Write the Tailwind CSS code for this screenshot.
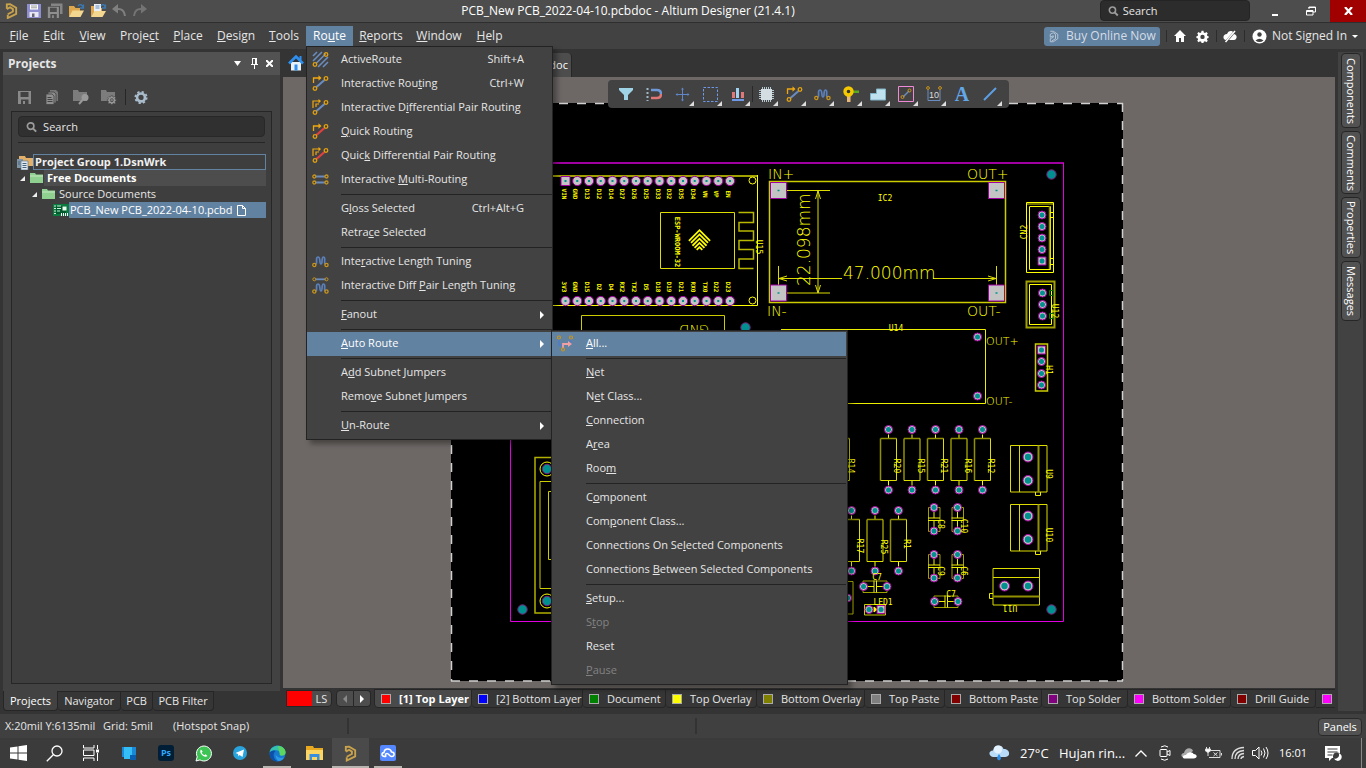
<!DOCTYPE html>
<html lang="en">
<head>
<meta charset="utf-8">
<title>PCB_New PCB_2022-04-10.pcbdoc - Altium Designer (21.4.1)</title>
<script src="https://cdn.jsdelivr.net/npm/@tailwindcss/browser@4"></script>
</head>
<body class="h-screen overflow-hidden flex flex-col bg-[#343434] text-[#e6e6e6] text-[11px] leading-4 font-['Open_Sans','Noto_Sans',sans-serif] select-none">

<!-- Shared icon shapes -->
<svg width="0" height="0" class="absolute" aria-hidden="true">
  <defs>
    <g id="altium" fill="none" stroke="#c9a24c" stroke-width="2"><path d="M3 6V1.500L6.500 1.200 13 5v6.500L4 16v-3.500"/><path d="M3 6.500 6.500 4.500 9.500 6.500V9L4 12"/></g>
    <g id="nodes" fill="none" stroke="#e0a010" stroke-width="1.300"><circle cx="14" cy="3.500" r="1.800"/><circle cx="3" cy="13.500" r="1.800"/></g>
    <g id="arrow1"><path d="M1.500 8V3h6" fill="none" stroke="#f0a810" stroke-width="1.300"/><path d="M6.500.3v5.400L9.500 3z" fill="#f0a810"/></g>
    <g id="arrow2"><path d="M1 9V2h6M4 8V5h3" fill="none" stroke="#f0a810" stroke-width="1.200"/><path d="M6.500 0v4.400L9 2z" fill="#f0a810"/></g>
    <path id="wave" d="M3.500 11C6 11 3 4 6 4s1 7 3 7 0-7 2.500-7 0 7 2 7" fill="none" stroke="#5b80bb" stroke-width="1.700"/>
    <g id="ends" fill="none" stroke="#c8941c" stroke-width="1.300"><circle cx="2.300" cy="12" r="1.600"/><circle cx="14.500" cy="12" r="1.600"/></g>
    <path id="gear" fill-rule="evenodd" d="M6.800 1h2.400l.4 2 1.500.6L12.800 2.500l1.700 1.700-1.100 1.700.6 1.500 1.500.3v2l-1.500.4-.6 1.500 1.100 1.700-1.700 1.700-1.700-1.100-1.500.6-.4 1.500H6.800l-.4-1.500-1.500-.6-1.700 1.100-1.700-1.700 1.100-1.700L2 10.100.5 9.700v-2L2 7.400l.6-1.500L1.500 4.200l1.700-1.700 1.700 1.100L6.400 3zM8 5.800a2.700 2.700 0 1 0 0 5.400 2.700 2.700 0 0 0 0-5.400z"/>
    <g id="mag" fill="none" stroke="#9c9c9c" stroke-width="1.800"><circle cx="5" cy="5" r="3.500"/><path d="M7.500 7.500 11 11" stroke-width="2.200"/></g>
    <path id="floppy" fill-rule="evenodd" d="M1 1h13v13H1zM3.500 2v5h8V2zM4 9.500V14h2v-3h2v3h3.500V9.500z"/>
    <path id="opn" d="M1 3h5l1.500 2H12v3H5L1 14z" fill="#e0a84c"/>
  </defs>
</svg>

<!-- Title bar -->
<header class="relative h-[23px] shrink-0 flex items-center bg-[#4d4d4d] border-b border-[#2e2e2e] pl-1">
  <div class="flex items-center gap-[5px]">
    <svg width="15" height="16" viewBox="0 0 16 17"><use href="#altium"/></svg>
    <button aria-label="Save" class="ml-[2px]"><svg width="16" height="16" viewBox="0 0 16 16"><path d="M1 1h14v14H1z" fill="#8f8fd0"/><path d="M4 1.500h8v5H4z" fill="#fff"/><path d="M5 3h6M5 4.800h6" stroke="#999"/><path d="M3.500 9h9v5h-9z" fill="#e8e8f4"/><path d="M6 10.500h2.500V14H6z" fill="#667"/></svg></button>
    <button aria-label="Save all"><svg width="16" height="16" viewBox="0 0 16 16"><path d="M4 .5h11.500V11H13V3H4z" fill="#858585"/><g fill="#8f8f8f"><use href="#floppy" transform="translate(0 3) scale(.85)"/></g></svg></button>
    <button aria-label="Open"><svg width="17" height="16" viewBox="0 0 17 16"><use href="#opn"/><path d="M1 14 4.500 7.500H16L12.500 14z" fill="#f5d890"/><path d="M10 3q3-3 5 1M15.500 1.500V5H12" fill="none" stroke="#3b78b0" stroke-width="1.300"/></svg></button>
    <button aria-label="Open document"><svg width="17" height="16" viewBox="0 0 17 16"><use href="#opn"/><path d="M4 1h7v9H4z" fill="#e8f0fa"/><path d="M5.500 3h4M5.500 5h4" stroke="#6a8db5"/><path d="M1 14 4.500 8H16L12.500 14z" fill="#f5d890"/><path d="M11 3q3-3 4 1M15.500 1.500V5H12" fill="none" stroke="#3b78b0" stroke-width="1.300"/></svg></button>
    <button aria-label="Undo"><svg width="15" height="14" viewBox="0 0 15 14"><path d="M5 5q7-1 8 7" fill="none" stroke="#808080" stroke-width="2"/><path d="M6 0v9.500L0 5z" fill="#808080"/></svg></button>
    <button aria-label="Redo"><svg width="15" height="14" viewBox="0 0 15 14"><path d="M10 5Q3 4 2 12" fill="none" stroke="#747474" stroke-width="2"/><path d="M9 0v9.500L15 5z" fill="#747474"/></svg></button>
  </div>
  <h1 class="absolute left-0 right-0 text-center text-xs text-white pointer-events-none pr-[110px]">PCB_New PCB_2022-04-10.pcbdoc - Altium Designer (21.4.1)</h1>
  <div class="ml-auto flex h-[22px]">
    <label class="flex items-center h-[21px] w-[150px] mr-[9px] px-[7px] gap-1 bg-[#2c2c2c] border border-[#242424] rounded-b-[4px] rounded-t-sm">
      <svg width="12" height="12" viewBox="0 0 12 12"><use href="#mag"/></svg>
      <input aria-label="Search" placeholder="Search" class="w-full bg-transparent outline-none placeholder:text-[#e6e6e6]">
    </label>
    <button aria-label="Minimize" class="w-[32px] grid place-items-center"><svg width="8" height="10"><path d="M1 8h6v2H1z" fill="#fff"/></svg></button>
    <button aria-label="Restore" class="w-[39px] grid place-items-center"><svg width="10" height="10" viewBox="0 0 10 10" fill="none" stroke="#fff"><path d="M3 3V1h6.500v5H7M2.500 1.500h7" /><path d="M.5 4.500H7v4.500H.5zM.5 5.500H7"/></svg></button>
    <button aria-label="Close" class="w-[36px] grid place-items-center bg-[#a00000]"><svg width="9" height="8" viewBox="0 0 9 8"><path d="M1 0l7 8M8 0 1 8" stroke="#fff" stroke-width="2.200"/></svg></button>
  </div>
</header>

<!-- Menu bar -->
<nav class="h-[26px] shrink-0 flex items-center bg-[#424242] pl-[2px] text-xs">
  <button class="min-w-[34px] h-[21px]"><u>F</u>ile</button>
  <button class="min-w-[36px] h-[21px]"><u>E</u>dit</button>
  <button class="min-w-[41px] h-[21px]"><u>V</u>iew</button>
  <button class="min-w-[53px] h-[21px]">Proje<u>c</u>t</button>
  <button class="min-w-[44px] h-[21px]"><u>P</u>lace</button>
  <button class="min-w-[52px] h-[21px]"><u>D</u>esign</button>
  <button class="min-w-[44px] h-[21px]"><u>T</u>ools</button>
  <div class="relative">
    <button class="min-w-[47px] h-[21px] bg-[#6282a1] text-white block">Ro<u>u</u>te</button>
    <div role="menu" class="absolute z-20 left-0 top-full -mt-px w-[247px] py-px bg-[#424242] border border-[#232323] shadow-[4px_4px_5px_rgba(0,0,0,0.35)] text-[11px]">
      <button class="w-full h-6 flex items-center pr-[28px]"><span class="w-[34px] pl-[5px]"><svg width="17" height="17" viewBox="0 0 17 17"><path d="M1 5l4-4M1 10 10 1M4 12.500 14 2.500M6 16l10-10M11 16l5-5" stroke="#6a8cc0" stroke-width="1.600"/><use href="#nodes"/></svg></span><span>ActiveRoute</span><span class="ml-auto">Shift+A</span></button>
      <button class="w-full h-6 flex items-center pr-[28px]"><span class="w-[34px] pl-[5px]"><svg width="17" height="17" viewBox="0 0 17 17"><path d="m4.500 12 8-7" stroke="#6a8cc0" stroke-width="2"/><use href="#nodes"/><use href="#arrow1"/></svg></span><span>Interactive Rou<u>t</u>ing</span><span class="ml-auto">Ctrl+W</span></button>
      <button class="w-full h-6 flex items-center"><span class="w-[34px] pl-[5px]"><svg width="17" height="17" viewBox="0 0 17 17"><path d="m4.500 12 8-7" stroke="#6a8cc0" stroke-width="2"/><use href="#nodes"/><use href="#arrow2"/></svg></span><span>Interactive D<u>i</u>fferential Pair Routing</span></button>
      <button class="w-full h-6 flex items-center"><span class="w-[34px] pl-[5px]"><svg width="17" height="17" viewBox="0 0 17 17"><path d="m4.500 12 8-7" stroke="#e04040" stroke-width="2.300"/><use href="#nodes"/><use href="#arrow1"/></svg></span><span><u>Q</u>uick Routing</span></button>
      <button class="w-full h-6 flex items-center"><span class="w-[34px] pl-[5px]"><svg width="17" height="17" viewBox="0 0 17 17"><path d="m4.500 12 8-7" stroke="#e04040" stroke-width="2.300"/><use href="#nodes"/><use href="#arrow2"/></svg></span><span>Quic<u>k</u> Differential Pair Routing</span></button>
      <button class="w-full h-6 flex items-center"><span class="w-[34px] pl-[5px]"><svg width="17" height="17" viewBox="0 0 17 17"><path d="M4 5.500h9M4 11.500h9" stroke="#6a8cc0" stroke-width="2"/><g fill="none" stroke="#c8941c" stroke-width="1.300"><circle cx="2.300" cy="5.500" r="1.500"/><circle cx="14.500" cy="5.500" r="1.500"/><circle cx="2.300" cy="11.500" r="1.500"/><circle cx="14.500" cy="11.500" r="1.500"/></g></svg></span><span>Interactive <u>M</u>ulti-Routing</span></button>
      <hr class="ml-[34px] my-[2px] border-[#232323]">
      <button class="w-full h-6 flex items-center pl-[34px] pr-[28px]"><span>G<u>l</u>oss Selected</span><span class="ml-auto">Ctrl+Alt+G</span></button>
      <button class="w-full h-6 flex items-center pl-[34px]"><span>Retra<u>c</u>e Selected</span></button>
      <hr class="ml-[34px] my-[2px] border-[#232323]">
      <button class="w-full h-6 flex items-center"><span class="w-[34px] pl-[5px]"><svg width="17" height="17" viewBox="0 0 17 17"><use href="#wave"/><use href="#ends"/></svg></span><span>Inte<u>r</u>active Length Tuning</span></button>
      <button class="w-full h-6 flex items-center"><span class="w-[34px] pl-[5px]"><svg width="17" height="17" viewBox="0 0 17 17"><use href="#wave" y="3"/><use href="#ends" y="2.500"/><path d="M3.500 2.300h10" stroke="#6a8cc0" stroke-width="1.800"/><circle cx="2.300" cy="2.300" r="1.500" fill="none" stroke="#c8941c"/><circle cx="14.500" cy="2.300" r="1.500" fill="none" stroke="#c8941c"/></svg></span><span>Interactive Diff <u>P</u>air Length Tuning</span></button>
      <hr class="ml-[34px] my-[2px] border-[#232323]">
      <button class="w-full h-6 flex items-center pl-[34px] pr-[8px]"><span><u>F</u>anout</span><svg class="ml-auto" width="4" height="8"><path d="M0 0v8l4-4z" fill="#fff"/></svg></button>
      <hr class="ml-[34px] my-[2px] border-[#232323]">
      <div class="relative">
        <button class="w-full h-6 border-r border-[#424242] bg-[#6282a1] text-white flex items-center pl-[34px] pr-[7px]"><span><u>A</u>uto Route</span><svg class="ml-auto" width="4" height="8"><path d="M0 0v8l4-4z" fill="#fff"/></svg></button>
        <div role="menu" class="absolute z-30 left-[244px] -top-[2px] w-[297px] py-px pr-px bg-[#424242] border border-[#232323] shadow-[4px_4px_5px_rgba(0,0,0,0.35)] text-[#e6e6e6]">
          <button class="w-full h-6 flex items-center bg-[#6282a1] text-white"><span class="w-[34px] pl-[5px]"><svg width="17" height="17" viewBox="0 0 17 17" fill="none"><path d="M2 4v6h4M13.500 4v6" stroke="#4f7cc8" stroke-width="1.500"/><path d="M6 13v-4h6" stroke="#f0a0a0" stroke-width="1.800"/><path d="M11 6v6l4-3z" fill="#f0a0a0"/><g stroke="#c8941c" stroke-width="1.200"><circle cx="2" cy="2.500" r="1.500"/><circle cx="14" cy="2.500" r="1.500"/><circle cx="6" cy="14.500" r="1.500"/></g></svg></span><span><u>A</u>ll...</span></button>
          <hr class="ml-[34px] my-[2px] border-[#232323]">
          <button class="w-full h-6 block text-left pl-[34px]"><u>N</u>et</button>
          <button class="w-full h-6 block text-left pl-[34px]">N<u>e</u>t Class...</button>
          <button class="w-full h-6 block text-left pl-[34px]"><u>C</u>onnection</button>
          <button class="w-full h-6 block text-left pl-[34px]">A<u>r</u>ea</button>
          <button class="w-full h-6 block text-left pl-[34px]">Roo<u>m</u></button>
          <hr class="ml-[34px] my-[2px] border-[#232323]">
          <button class="w-full h-6 block text-left pl-[34px]">C<u>o</u>mponent</button>
          <button class="w-full h-6 block text-left pl-[34px]">Com<u>p</u>onent Class...</button>
          <button class="w-full h-6 block text-left pl-[34px]">Connections On Se<u>l</u>ected Components</button>
          <button class="w-full h-6 block text-left pl-[34px]">Connections <u>B</u>etween Selected Components</button>
          <hr class="ml-[34px] my-[2px] border-[#232323]">
          <button class="w-full h-6 block text-left pl-[34px]"><u>S</u>etup...</button>
          <button disabled class="w-full h-6 block text-left pl-[34px] text-[#828282]">S<u>t</u>op</button>
          <button class="w-full h-6 block text-left pl-[34px]">Reset</button>
          <button disabled class="w-full h-6 block text-left pl-[34px] text-[#828282]"><u>P</u>ause</button>
        </div>
      </div>
      <hr class="ml-[34px] my-[2px] border-[#232323]">
      <button class="w-full h-6 block text-left pl-[34px]">A<u>d</u>d Subnet Jumpers</button>
      <button class="w-full h-6 block text-left pl-[34px]">Remo<u>v</u>e Subnet Jumpers</button>
      <hr class="ml-[34px] my-[2px] border-[#232323]">
      <button class="w-full h-6 flex items-center pl-[34px] pr-[8px]"><span><u>U</u>n-Route</span><svg class="ml-auto" width="4" height="8"><path d="M0 0v8l4-4z" fill="#fff"/></svg></button>
    </div>
  </div>
  <button class="min-w-[56px] h-[21px]"><u>R</u>eports</button>
  <button class="min-w-[60px] h-[21px]"><u>W</u>indow</button>
  <button class="min-w-[41px] h-[21px]"><u>H</u>elp</button>
  <div class="ml-auto flex items-center pr-2">
    <button class="w-[116px] h-[19px] rounded-[3px] bg-[#6282a1] flex items-center justify-center gap-[6px] text-[#d5dde5]"><svg width="12" height="13" viewBox="0 0 16 16" fill="none" stroke="#d0d8e0"><path d="M3 1h4l6 4v6l-6 4H3l0-4 4-2V7L3 9V5l4-2 3 2v6l-5 3"/></svg>Buy Online Now</button>
    <span class="w-px h-3 bg-[#2c2c2c] mx-[6px]"></span>
    <button aria-label="Home" class="w-[14px] mr-[9px]"><svg width="14" height="14" viewBox="0 0 14 14"><path d="M7 1 1 7h2v6h3V9h2v4h3V7h2z" fill="#fff"/></svg></button>
    <button aria-label="Preferences" class="w-[14px]"><svg width="13" height="13" viewBox="0 0 16 16" fill="#fff"><use href="#gear"/></svg></button>
    <span class="w-px h-3 bg-[#2c2c2c] mx-[6px]"></span>
    <button aria-label="Cloud disconnected" class="w-[14px]"><svg width="14" height="14" viewBox="0 0 14 14"><path d="M3 11C-1 10 0 5 4 5c2-4 5-3 6-2zM11 5c4 1 3 6 0 6H6z" fill="#fff"/><path d="M2.500 13 12 2" stroke="#fff" stroke-width="1.500"/></svg></button>
    <span class="w-px h-3 bg-[#2c2c2c] mx-[7px]"></span>
    <button class="flex items-center gap-[5px]"><svg width="15" height="15" viewBox="0 0 15 15"><circle cx="7.500" cy="7.500" r="7" fill="#fff"/><circle cx="7.500" cy="5.500" r="2.200" fill="#424242"/><path d="M3.500 11.500q4-3.500 8 0-4 3-8 0" fill="#424242"/></svg>Not Signed In<svg width="6" height="3"><path d="M0 0h6L3 3z" fill="#fff"/></svg></button>
  </div>
</nav>

<main class="flex-1 min-h-0 flex pl-[3px] pr-[3px]">
  <!-- Projects panel -->
  <aside class="w-[277px] shrink-0 flex flex-col mt-[3px]">
    <div class="flex-1 min-h-0 flex flex-col bg-[#424242]">
      <div class="h-[23px] shrink-0 bg-[#525252] flex items-center pl-[5px] pr-[7px]">
        <h2 class="font-bold text-xs">Projects</h2>
        <div class="ml-auto flex items-center gap-2">
          <button aria-label="Panel menu"><svg width="8" height="5"><path d="M0 0h7L3.500 5z" fill="#fff"/></svg></button>
          <button aria-label="Pin"><svg width="8" height="11"><path d="M1 6.500h7M2.500 0v6M4.500 6v5M2 .5h4" stroke="#fff"/><path d="M5 0h2v6H5z" fill="#fff"/></svg></button>
          <button aria-label="Close panel"><svg width="7" height="7"><path d="m0 0 7 7M7 0 0 7" stroke="#fff" stroke-width="2"/></svg></button>
        </div>
      </div>
      <div class="h-[36px] shrink-0 flex items-center pt-2 pl-[14px] gap-3">
        <button aria-label="Save project" class="w-4"><svg width="15" height="15" viewBox="0 0 15 15" fill="#8a8a8a"><use href="#floppy"/></svg></button>
        <button aria-label="Compile" class="w-4"><svg width="15" height="16" viewBox="0 0 15 16"><path d="M5 1h6l2 2v9H5z" fill="#777"/><path d="M3 3h6l2 2v9H3z" fill="#8a8a8a" stroke="#424242" stroke-width=".8"/><path d="M1 5h6l2 2v8.500H1z" fill="#909090" stroke="#424242" stroke-width=".8"/><path d="M2.500 8.500h4M2.500 10.500h5M2.500 12.500h5" stroke="#424242"/></svg></button>
        <button aria-label="Explore" class="w-4"><svg width="17" height="16" viewBox="0 0 17 16"><path d="M0 1h5l1 2h8v9H0z" fill="#7c7c7c"/><circle cx="12" cy="8.500" r="3.500" fill="#999"/><path d="m9.500 11-3.500 4" stroke="#999" stroke-width="2"/></svg></button>
        <button aria-label="Project options" class="w-4"><svg width="17" height="16" viewBox="0 0 17 16"><path d="M0 1h5l1 2h8v9H0z" fill="#7c7c7c"/><g transform="translate(6 6) scale(.6)" fill="#999" stroke="#424242"><use href="#gear"/></g></svg></button>
        <span class="w-px h-4 bg-[#262626] -mx-1"></span>
        <button aria-label="Settings" class="w-4"><svg width="14" height="14" viewBox="0 0 16 16"><circle cx="8" cy="8.500" r="4.500" fill="none" stroke="#a9bccb" stroke-width="3"/><circle cx="8" cy="8.500" r="6.500" fill="none" stroke="#a9bccb" stroke-width="2" stroke-dasharray="2.600 2.500"/></svg></button>
      </div>
      <div class="flex-1 min-h-0 mx-2 mb-[7px] border border-[#262626] bg-[#3e3e3e] px-[5px]">
        <label class="mt-1 flex items-center gap-[6px] h-[21px] px-[7px] mx-px rounded bg-[#303030] border border-[#282828]">
          <svg width="12" height="12" viewBox="0 0 12 12"><use href="#mag"/></svg>
          <input aria-label="Search projects" placeholder="Search" class="w-full bg-transparent outline-none placeholder:text-[#e6e6e6]">
        </label>
        <hr class="mt-[5px] mx-px border-[#262626]">
        <ul class="mt-[11px]">
          <li class="flex h-4 items-center"><svg class="shrink-0" width="16" height="15" viewBox="0 0 16 15"><path d="M2 1h6l1 2h7v8H2z" fill="#e3b069"/><path d="M0 4h6v9H0z" fill="#7f93a6"/><path d="M4 6h7v9H4z" fill="#dfe8f0" stroke="#61788c" stroke-width=".7"/><path d="M5.500 8.500h4M5.500 10.500h4M5.500 12.500h4M1 7h2M1 9h2" stroke="#49647c"/></svg><span class="flex-1 h-4 border border-[#6282a1] font-bold leading-[14px] pl-px text-[#f0f0f0]">Project Group 1.DsnWrk</span></li>
          <li class="flex h-4 items-center pl-[3px]"><svg width="5" height="5"><path d="M5 0v5H0z" fill="#eee"/></svg><svg class="ml-[5px]" width="14" height="12"><path d="M0 1h5l1 1.500h7V11H0z" fill="#8fcf90"/><path d="M0 4h13" stroke="#c2e8c0"/></svg><span class="flex-1 h-4 pl-[3px] bg-[#4d4d4d] font-bold text-white">Free Documents</span></li>
          <li class="flex h-4 items-center pl-[15px]"><svg width="5" height="5"><path d="M5 0v5H0z" fill="#eee"/></svg><svg class="ml-[5px]" width="14" height="12"><path d="M0 1h5l1 1.500h7V11H0z" fill="#8fcf90"/><path d="M0 4h13" stroke="#c2e8c0"/></svg><span class="pl-[3px]">Source Documents</span></li>
          <li class="flex h-4 items-center pl-[36px]"><svg class="shrink-0" width="16" height="12"><path d="M0 0h16v12H0z" fill="#0a7a3e"/><path d="M3 2h10v8H3z" fill="#005a2c"/><path d="M1 2h2M1 4.500h2M1 7h2M1 9.500h2M4 2h4M4 4.500h4M4 7h3" stroke="#c8f0d8"/><path d="M9.500 2.500h4v4h-4z" fill="#e8fff0"/><path d="M8.500 9v3M10.500 9v3M12.500 9v3M14.500 9v3" stroke="#fff"/></svg><span class="flex-1 flex items-center gap-1 h-4 pl-px bg-[#6282a1] text-white">PCB_New PCB_2022-04-10.pcbd<svg width="9" height="11" viewBox="0 0 9 11"><path d="M.5.5h5l3 3v7h-8zM5.500.5v3h3" fill="none" stroke="#fff"/></svg></span></li>
        </ul>
      </div>
    </div>
    <div class="h-[23px] shrink-0 flex items-start">
      <button class="h-[20px] px-[6px] min-w-[53px] bg-[#424242] border-x border-b border-[#262626] rounded-b text-white">Projects</button>
      <button class="h-[20px] px-[5px] min-w-[63px] bg-[#363636] border-r border-y border-[#262626] rounded-b">Navigator</button>
      <button class="h-[20px] min-w-[32px] bg-[#363636] border-r border-y border-[#262626] rounded-b">PCB</button>
      <button class="h-[20px] px-[5px] min-w-[61px] bg-[#363636] border-r border-y border-[#262626] rounded-b">PCB Filter</button>
    </div>
  </aside>

  <!-- Editor -->
  <section class="flex-1 min-w-0 flex flex-col ml-[3px]">
    <div class="h-[28px] shrink-0 flex items-end pl-[5px]">
      <button aria-label="Home" class="self-center"><svg width="16" height="16" viewBox="0 0 16 16"><path d="M3 7h10v8.500H3z" fill="#e8f0f8"/><path d="m1 8.500 7-7 7 7" fill="none" stroke="#2e8ff0" stroke-width="2.600"/><path d="M11.500 1h2v4h-2z" fill="#2e8ff0"/><path d="M6.500 9.500h3v6h-3z" fill="#2e8ff0"/></svg></button>
      <button class="ml-[7px] h-[24px] w-[261px] rounded-t-[4px] bg-[#4d4d4d] border-r border-[#262626] text-right pr-[3px] text-white">PCB_New PCB_2022-04-10.pcbdoc</button>
    </div>
    <div class="relative flex-1 min-h-0 bg-[#6d6866] overflow-hidden">
      <svg class="block w-full h-full" viewBox="283 77 1052 611" preserveAspectRatio="xMinYMin slice" role="img" aria-label="PCB layout">
        <defs>
          <g id="pad"><circle r="4" fill="#c4c4c4" stroke="#a000a0"/><circle r="2.500" fill="#009090" stroke="none"/></g>
          <g id="sqpad"><path d="M-4-4h8v8h-8z" fill="#c4c4c4" stroke="#a000a0"/><circle r="2.500" fill="#009090" stroke="none"/></g>
          <g id="pin"><circle r="4.600" fill="#c4c4c4" stroke="#a000a0"/><path d="M-1-1h2v2h-2z" fill="#009090" stroke="none"/></g>
          <g id="sqpin"><path d="M-4.500-4.500h9v9h-9z" fill="#c4c4c4" stroke="#a000a0"/><path d="M-1-1h2v2h-2z" fill="#009090" stroke="none"/></g>
          <g id="bigpad"><circle r="5" fill="#c4c4c4" stroke="#a000a0"/><circle r="3.200" fill="#009090" stroke="none"/></g>
          <g id="hole"><circle r="4.700" fill="#009090" stroke="#7a207a"/></g>
          <g id="corner"><path d="M-8-8H8V8H-8z" fill="#c4c4c4" stroke="#a000a0"/><path d="M-1 0h2" stroke="#009090" stroke-width="1.500"/></g>
          <g id="res"><path d="M0 5v4M0 51v5" stroke="#ff0"/><path d="M-8 9v42M-8 9H8" stroke="#909000" stroke-width="1.500"/><path d="M8 9v42H-8" stroke="#dd0"/><use href="#pad"/><use href="#pad" y="60.500"/></g>
          <g id="cap"><path d="M-5.500 0v24M6 0v24M-5.500 0h3M6 0H3M-5.500 24h3M6 24H3" stroke="#a0a000"/><path d="M-6 10.500H6M-6 13H6M0 3v7.500M0 13v8" stroke="#ee0"/><use href="#pad"/><use href="#pad" y="23.500"/></g>
          <g id="term"><path d="M0 0h36.500v46.500H0zM9 0v46.500" stroke="#dd0"/><path d="M28 0v46.500" stroke="#909000" stroke-width="2"/><path d="M25 46.500v3.500h5v-3.500" stroke="#ee0"/><use href="#bigpad" x="17.500" y="11.500"/><use href="#bigpad" x="17.500" y="35"/></g>
        </defs>
        <path d="M451 103h672v578H451z" fill="#000"/>
        <path d="M451 103.500h672M451 681h672M451.500 103v578M1122.500 103v578" stroke="#d0d0d0" stroke-width="1.500" stroke-dasharray="9 9" fill="none"/>
        <path d="M510 163h554" stroke="#a000a0" stroke-width="2"/>
        <path d="M510.500 163v458.500h553V163" fill="none" stroke="#e000e0"/>
        <use href="#hole" x="1051.500" y="174.500"/><use href="#hole" x="1051.500" y="609.500"/><use href="#hole" x="522.500" y="609.500"/><use href="#hole" x="745.500" y="327.500"/>
        <g fill="none" stroke="#ff0">
          <path d="M540 176h218" stroke="#a0a000" stroke-width="2"/><path d="M757.500 175v130.500H540"/>
          <circle cx="752.500" cy="180.500" r="3.500"/><circle cx="752.500" cy="300.500" r="3.500"/>
          <path d="M660.500 212.500h74v56h-74z" stroke="#dd0"/>
          <path d="M738.500 212.500h15v10H739v8.500h14.500v9.500H739v9h14.500v9.500H739v9.500h14.500" stroke="#b8b800" stroke-width="1.500"/>
          <path d="M581.500 340v-24.500h143V340" stroke="#cc0"/>
          <g transform="translate(699.500 241.500) rotate(45)" stroke-width="1.800"><path d="M-8 7v-15h15M-5 7V-5H7M-2 8v-10H8M1 8V1h7M4 8V4h4"/></g>
          <path d="M769.500 181.500h236v121h-236z" stroke="#cc0" stroke-width="1.500"/>
          <path d="M787 190.500h43M787 293h43M818 191v102M815.500 199l2.500-8 2.500 8M815.500 285l2.500 8 2.500-8M778.500 266v19M996.500 266v19M779 278.500h63M933 278.500h63M787 276l-8 2.500 8 2.500M988 276l8 2.500-8 2.500" stroke="#dd0"/>
          <path d="M781 329.500h204.500v74H781" stroke="#ee0"/>
          <path d="M1026.500 202.500h27v70h-27zM1029.500 206.500h21v63h-21z"/><path d="M1027 204h26M1049.500 206v63" stroke="#909000" stroke-width="1.500"/><path d="M1050 212.500h3.500M1050 217.500h3.500M1050 258.500h3.500M1050 264.500h3.500"/>
          <path d="M1026.500 281.500h28v46h-28z" stroke="#a0a000" stroke-width="2"/><path d="M1029.500 284.500h22v40h-22z"/><path d="M1049.500 290.500h4v5h-4zM1049.500 313.500h4v5h-4z" stroke="#087008"/>
          <path d="M1035.500 344h12v47h-12z" stroke="#cc0" stroke-width="1.500"/>
          <use href="#res" x="888.500" y="429.500"/><use href="#res" x="912" y="429.500"/><use href="#res" x="935.500" y="429.500"/><use href="#res" x="959" y="429.500"/><use href="#res" x="982.500" y="429.500"/><use href="#res" x="841.500" y="429.500"/>
          <use href="#res" x="851.500" y="510.500"/><use href="#res" x="875" y="510.500"/><use href="#res" x="898.500" y="510.500"/>
          <use href="#cap" x="934" y="507.500"/><use href="#cap" x="957.500" y="507.500"/><use href="#cap" x="934" y="554.500"/><use href="#cap" x="957.500" y="554.500"/>
          <use href="#cap" transform="translate(887 586.500) rotate(90)"/><use href="#cap" transform="translate(958 601.500) rotate(90)"/>
          <path d="M864.500 604.500h21v10.500h-21z" stroke="#cc0"/><path d="m874 607 3 2.500-3 2.500z" fill="#ff0"/>
          <path d="M848 581.500h5v32.500h-5" stroke="#b0b000"/>
          <use href="#term" x="1010.500" y="445.500"/><use href="#term" x="1010.500" y="504.500"/><use href="#term" transform="translate(1039.500 568.500) rotate(90)"/>
          <path d="M560 457.500h-25v155.500h25" stroke="#b0b000" stroke-width="1.500"/><path d="M560 481.500h-20v107h20M560 491.500h-11.500v68H560" stroke="#cc0"/>
          <circle cx="547" cy="469" r="7"/><circle cx="547" cy="601" r="7"/>
        </g>
        <use href="#hole" x="547" y="469"/><use href="#hole" x="547" y="601"/>
        <g id="pins"></g>
        <use href="#corner" x="778.500" y="190.500"/><use href="#corner" x="996.500" y="190.500"/><use href="#corner" x="778.500" y="293"/><use href="#corner" x="996.500" y="293"/>
        <use href="#pad" x="977.500" y="337"/><use href="#pad" x="977.500" y="396"/>
        <use href="#pad" x="1042" y="215"/><use href="#pad" x="1042" y="226.500"/><use href="#pad" x="1042" y="238"/><use href="#pad" x="1042" y="249.500"/><use href="#sqpad" x="1042" y="261"/>
        <use href="#pad" x="1042.500" y="293"/><use href="#pad" x="1042.500" y="304.500"/><use href="#pad" x="1042.500" y="316"/>
        <use href="#sqpad" x="1041.500" y="350"/><use href="#pad" x="1041.500" y="361.500"/><use href="#pad" x="1041.500" y="373.500"/><use href="#pad" x="1041.500" y="385"/>
        <use href="#pad" x="869" y="609.500"/><use href="#sqpad" x="881" y="609.500"/><use href="#pad" x="847.500" y="598"/>
        <g id="labels" fill="#ff0" text-anchor="middle" class="font-['DejaVu_Sans_Mono',monospace] text-[8px]"></g>
        <g fill="#ff0" class="font-['DejaVu_Sans','Liberation_Sans',sans-serif] font-extralight">
          <g class="text-[14px]"><text x="768" y="179">IN+</text><text x="967" y="179">OUT+</text><text x="767" y="316">IN-</text><text x="967" y="316">OUT-</text></g>
          <g class="text-[11px]"><text x="986" y="345">OUT+</text><text x="986" y="405">OUT-</text><text class="text-[13px]" transform="translate(709 325) rotate(180)">GND</text></g>
          <g class="text-[17px]"><text x="843" y="279">47.000mm</text><text transform="translate(810 286) rotate(-90)">22.098mm</text></g>
        </g>
      </svg>

      <!-- Active bar -->
      <div role="toolbar" class="absolute left-[325px] top-[3px] h-[28px] w-[401px] pl-[4px] flex rounded bg-[#424242]">
        <button aria-label="Filter" class="w-7 grid place-items-center"><svg width="14" height="14" viewBox="0 0 14 14"><path d="M0 1h14v2L9 8v5H5V8L0 3z" fill="#9fd3e6"/></svg></button>
        <button aria-label="Snap" class="w-7 grid place-items-center"><svg width="16" height="14" viewBox="0 0 16 14" fill="none"><path d="M5 3h6q4 0 4 4" stroke="#6f98d8" stroke-width="2.500"/><path d="M5 11h6q4 0 4-4" stroke="#e27676" stroke-width="2.500"/><path d="M1.500 1v13" stroke="#9fb8c8" stroke-width="2" stroke-dasharray="2 2"/></svg></button>
        <button aria-label="Move" class="relative w-7 grid place-items-center"><svg width="15" height="15" viewBox="0 0 15 15"><path d="M7.500 1v13M1 7.500h13" stroke="#5f86c8"/><path d="M6 2.500l1.500-2 1.500 2zM6 12.500l1.500 2 1.500-2zM2.500 6l-2 1.500 2 1.500zM12.500 6l2 1.500-2 1.500z" fill="#5f86c8"/></svg><svg class="absolute right-[2px] bottom-[2px]" width="5" height="5"><path d="M5 0v5H0z" fill="#ddd"/></svg></button>
        <button aria-label="Select" class="relative w-7 grid place-items-center"><svg width="15" height="15"><path d="M.5.5h14v14H.5z" fill="none" stroke="#6f98e8" stroke-dasharray="2.500 1.500"/></svg><svg class="absolute right-[2px] bottom-[2px]" width="5" height="5"><path d="M5 0v5H0z" fill="#ddd"/></svg></button>
        <button aria-label="Align" class="relative w-7 grid place-items-center"><svg width="14" height="14"><path d="M1 5h3v6H1zM10 5h3v6h-3z" fill="#e07878"/><path d="M5 1h3v10H5z" fill="#9fd3f0"/><path d="M1 12h12v2H1z" fill="#6f98e8"/></svg><svg class="absolute right-[2px] bottom-[2px]" width="5" height="5"><path d="M5 0v5H0z" fill="#ddd"/></svg></button>
        <button aria-label="Place component" class="relative w-7 grid place-items-center"><svg class="absolute left-0 top-[6px]" width="1" height="16"><path d="M0 0h1v16H0z" fill="#2a2a2a"/></svg><svg width="15" height="15" viewBox="0 0 15 15"><path d="M3.500 0v15M5.500 0v15M7.500 0v15M9.500 0v15M11.500 0v15M0 3.500h15M0 5.500h15M0 7.500h15M0 9.500h15M0 11.500h15" stroke="#b4c8d2"/><path d="M2 2h11v11H2z" fill="#d4dee2"/></svg><svg class="absolute right-[2px] bottom-[2px]" width="5" height="5"><path d="M5 0v5H0z" fill="#ddd"/></svg></button>
        <button aria-label="Route" class="relative w-7 grid place-items-center"><svg width="17" height="17" viewBox="0 0 17 17"><path d="m4.500 12 8-7" stroke="#6a8cc0" stroke-width="2"/><use href="#nodes"/><use href="#arrow1"/></svg><svg class="absolute right-[2px] bottom-[2px]" width="5" height="5"><path d="M5 0v5H0z" fill="#ddd"/></svg></button>
        <button aria-label="Length tuning" class="relative w-7 grid place-items-center"><svg width="17" height="16" viewBox="0 0 17 16"><use href="#wave"/><use href="#ends"/></svg><svg class="absolute right-[2px] bottom-[2px]" width="5" height="5"><path d="M5 0v5H0z" fill="#ddd"/></svg></button>
        <button aria-label="Via" class="relative w-7 grid place-items-center"><svg width="17" height="16" viewBox="0 0 17 16"><path d="M9 4.500h8v2.500H9z" fill="#58a820"/><path d="M5 9h3.500v7H5z" fill="#e8b878"/><circle cx="6.500" cy="5.500" r="3.500" fill="#333" stroke="#f5c800" stroke-width="3.400"/></svg><svg class="absolute right-[2px] bottom-[2px]" width="5" height="5"><path d="M5 0v5H0z" fill="#ddd"/></svg></button>
        <button aria-label="Polygon" class="relative w-7 grid place-items-center"><svg width="16" height="13"><path d="M.5 5.500h6V1h9v11H.5z" fill="#bfe2ee" stroke="#82b4c8"/></svg><svg class="absolute right-[2px] bottom-[2px]" width="5" height="5"><path d="M5 0v5H0z" fill="#ddd"/></svg></button>
        <button aria-label="Keepout" class="relative w-7 grid place-items-center"><svg width="16" height="16" viewBox="0 0 16 16"><path d="M.5.5h15v15H.5z" fill="none" stroke="#f08ad8"/><path d="m5 11 6-6" stroke="#6a8cc0" stroke-width="1.500"/><g fill="none" stroke="#c8941c"><circle cx="4.500" cy="11" r="1.500"/><circle cx="11.500" cy="4.500" r="1.500"/></g></svg><svg class="absolute right-[2px] bottom-[2px]" width="5" height="5"><path d="M5 0v5H0z" fill="#ddd"/></svg></button>
        <button aria-label="Dimension" class="relative w-7 grid place-items-center"><svg width="16" height="16" viewBox="0 0 16 16"><path d="M2 4v10.500h12V4" fill="none" stroke="#6a8cc0"/><g fill="none" stroke="#c8941c"><circle cx="2" cy="2" r="1.400"/><circle cx="14" cy="2" r="1.400"/></g><text x="8" y="12" text-anchor="middle" fill="#ddd" class="text-[9px] font-['Liberation_Sans',sans-serif]">10</text></svg><svg class="absolute right-[2px] bottom-[2px]" width="5" height="5"><path d="M5 0v5H0z" fill="#ddd"/></svg></button>
        <button aria-label="Text" class="w-7 text-[20px] leading-[28px] text-center font-bold text-[#62a8e8] font-['Liberation_Serif',serif]">A</button>
        <button aria-label="Line" class="relative w-7 grid place-items-center"><svg width="14" height="14"><path d="M1 13 13 1" stroke="#5c9fe4" stroke-width="2"/></svg><svg class="absolute right-[2px] bottom-[2px]" width="5" height="5"><path d="M5 0v5H0z" fill="#ddd"/></svg></button>
      </div>
    </div>
    <!-- Layer tabs -->
    <div class="h-[26px] shrink-0 flex items-start overflow-hidden whitespace-nowrap pl-[3px] pt-[2px]">
      <button class="flex h-[17px] w-[46px] shrink-0 rounded-r border border-[#262626] bg-[#4d4d4d]"><span class="w-[25px] h-[15px] bg-[#f00]"></span><span class="flex-1 text-center leading-[15px]">LS</span></button>
      <button aria-label="Previous layer" class="ml-1 w-[18px] h-[17px] shrink-0 grid place-items-center rounded-l border border-[#262626] bg-[#4d4d4d]"><svg width="4" height="8"><path d="M4 0v8L0 4z" fill="#888"/></svg></button>
      <button aria-label="Next layer" class="w-[17px] h-[17px] shrink-0 grid place-items-center rounded-r border-y border-r border-[#262626] bg-[#4d4d4d]"><svg width="4" height="8"><path d="M0 0v8l4-4z" fill="#fff"/></svg></button>
      <div class="flex ml-[3px] -mt-px">
        <button class="flex items-center gap-2 h-[19px] w-[98px] shrink-0 pl-[6px] border border-[#262626] rounded-b bg-[#4a4a4a] font-bold text-white"><i class="size-[10px] shrink-0 border border-[#aaa] bg-[#f00]"></i>[1] Top Layer</button>
        <button class="flex items-center gap-2 h-[19px] w-[111px] shrink-0 pl-[6px] border-r border-y border-[#262626] rounded-b bg-[#363636]"><i class="size-[10px] shrink-0 border border-[#aaa] bg-[#00f]"></i>[2] Bottom Layer</button>
        <button class="flex items-center gap-2 h-[19px] w-[83px] shrink-0 pl-[6px] border-r border-y border-[#262626] rounded-b bg-[#363636]"><i class="size-[10px] shrink-0 border border-[#aaa] bg-[#008000]"></i>Document</button>
        <button class="flex items-center gap-2 h-[19px] w-[91px] shrink-0 pl-[6px] border-r border-y border-[#262626] rounded-b bg-[#363636]"><i class="size-[10px] shrink-0 border border-[#aaa] bg-[#ff0]"></i>Top Overlay</button>
        <button class="flex items-center gap-2 h-[19px] w-[108px] shrink-0 pl-[6px] border-r border-y border-[#262626] rounded-b bg-[#363636]"><i class="size-[10px] shrink-0 border border-[#aaa] bg-[#808000]"></i>Bottom Overlay</button>
        <button class="flex items-center gap-2 h-[19px] w-[80px] shrink-0 pl-[6px] border-r border-y border-[#262626] rounded-b bg-[#363636]"><i class="size-[10px] shrink-0 border border-[#aaa] bg-[#808080]"></i>Top Paste</button>
        <button class="flex items-center gap-2 h-[19px] w-[97px] shrink-0 pl-[6px] border-r border-y border-[#262626] rounded-b bg-[#363636]"><i class="size-[10px] shrink-0 border border-[#aaa] bg-[#800000]"></i>Bottom Paste</button>
        <button class="flex items-center gap-2 h-[19px] w-[86px] shrink-0 pl-[6px] border-r border-y border-[#262626] rounded-b bg-[#363636]"><i class="size-[10px] shrink-0 border border-[#aaa] bg-[#800080]"></i>Top Solder</button>
        <button class="flex items-center gap-2 h-[19px] w-[103px] shrink-0 pl-[6px] border-r border-y border-[#262626] rounded-b bg-[#363636]"><i class="size-[10px] shrink-0 border border-[#aaa] bg-[#f0f]"></i>Bottom Solder</button>
        <button class="flex items-center gap-2 h-[19px] w-[85px] shrink-0 pl-[6px] border-r border-y border-[#262626] rounded-b bg-[#363636]"><i class="size-[10px] shrink-0 border border-[#aaa] bg-[#800000]"></i>Drill Guide</button>
        <button aria-label="Keep-Out Layer" class="flex items-center h-[19px] w-[30px] shrink-0 pl-[6px] border-y border-[#262626] bg-[#363636]"><i class="size-[10px] shrink-0 border border-[#aaa] bg-[#f0f]"></i></button>
      </div>
    </div>
  </section>

  <!-- Right panel rail -->
  <aside class="ml-[3px] mt-[3px] mb-[3px] w-[25px] shrink-0 bg-[#424242] flex flex-col items-center gap-[3px] pt-px">
    <button class="w-5 h-[75px] rounded bg-[#525252] border border-[#262626] [writing-mode:vertical-rl] text-center leading-[18px] text-white">Components</button>
    <button class="w-5 h-[63px] rounded bg-[#525252] border border-[#262626] [writing-mode:vertical-rl] text-center leading-[18px] text-white">Comments</button>
    <button class="w-5 h-[61px] rounded bg-[#525252] border border-[#262626] [writing-mode:vertical-rl] text-center leading-[18px] text-white">Properties</button>
    <button class="w-5 h-[60px] rounded bg-[#525252] border border-[#262626] [writing-mode:vertical-rl] text-center leading-[18px] text-white">Messages</button>
  </aside>
</main>

<!-- Status bar -->
<footer class="relative h-6 shrink-0 flex items-center bg-[#404040] pl-[5px] pr-1">
  <span class="w-[98px]">X:20mil Y:6135mil</span><span class="w-[70px]">Grid: 5mil</span><span class="w-[174px]">(Hotspot Snap)</span>
  <span class="w-[2px] h-4 bg-[#333]"></span><span class="w-[2px] h-4 ml-[346px] bg-[#333]"></span>
  <button class="ml-auto mt-[2px] w-[44px] h-[18px] rounded border border-[#2a2a2a] bg-[#525252] text-white">Panels</button>
</footer>

<!-- Windows taskbar -->
<div class="h-[30px] shrink-0 flex items-center bg-[#3b3b3b] text-[13px] text-white">
  <button aria-label="Start" class="w-9 h-full grid place-items-center"><svg width="17" height="16" viewBox="0 0 17 16"><path d="M0 2.500 7.500 1.500v6H0zM8.500 1.300 17 0v7.500H8.500zM0 8.500h7.500v6L0 13.500zM8.500 8.500H17V16l-8.500-1.300z" fill="#fff"/></svg></button>
  <button aria-label="Search" class="w-[37px] h-full grid place-items-center"><svg width="17" height="17" viewBox="0 0 17 17" fill="none" stroke="#fff" stroke-width="1.300"><circle cx="11" cy="6" r="5"/><path d="M7.500 9.500.8 16.200"/></svg></button>
  <button aria-label="Task view" class="w-[36px] h-full grid place-items-center"><svg width="17" height="16" viewBox="0 0 17 16" fill="none" stroke="#fff"><path d="M.5 0v3h10.500V0M.5 16v-3h10.500v3M.5 5h10.500v5.500H.5zM14.500 0v4M14.500 8v8"/><path d="M13 4.500h3v3h-3z" fill="#fff" stroke="none"/></svg></button>
  <button aria-label="Your Phone" class="w-[39px] h-full grid place-items-center"><svg width="16" height="15" viewBox="0 0 16 15"><path d="M1 1h14v10H1z" fill="#1a8ad8"/><path d="M3 1h8v12H3z" fill="#35bdf5"/><path d="M9 9h6v5H9z" fill="#0a5fb0"/></svg></button>
  <button aria-label="Photoshop" class="w-[36px] h-full grid place-items-center"><span class="w-4 h-4 rounded-[3px] bg-[#001e36] text-[#31a8ff] text-[9px] leading-4 font-bold text-center">Ps</span></button>
  <button aria-label="WhatsApp" class="w-[38px] h-full grid place-items-center"><svg width="17" height="17" viewBox="0 0 17 17"><path d="M1 16l1.200-4.200A7.500 7.500 0 1 1 5 14.900z" fill="#3ec455" stroke="#fff"/><path d="M6 4.500c-3 3 3.500 9.500 6.500 6.500l-2-1.700-1 .9C8 9.600 7.300 8.800 6.700 7.500l1-1z" fill="#fff"/></svg></button>
  <button aria-label="Telegram" class="w-[36px] h-full grid place-items-center"><svg width="14" height="14" viewBox="0 0 14 14"><circle cx="7" cy="7" r="7" fill="#28a3dc"/><path d="m2.500 7 8.500-3.500L9.500 11 6.500 9 5.500 10.500 5 8z" fill="#fff"/></svg></button>
  <button aria-label="Edge" class="relative w-[38px] h-full grid place-items-center"><svg width="17" height="17" viewBox="0 0 17 17"><circle cx="8.500" cy="8.500" r="8" fill="#1779cf"/><path d="M.5 7.500C2-1 15-1.500 16.500 7c.3 4-5 4-6 2.800 2-2.300-1-5.300-4-4.500C3 5.200 1 6.500.5 7.500z" fill="#35c1b0"/><path d="M9 1c5 0 8 4 7.500 7-.5 3-4 3-5.500 2z" fill="#5cd65f"/><path d="M6.500 6c-4 4-1 9.500 3 10.300-6 1-9.500-4-9-8C2 5.500 5 5 6.500 6z" fill="#0c50a8"/><path d="M7 8c-1 3 3 6 8 4.500-1 2-3 3.500-6 3.500-2-2-3-5-2-8z" fill="#2b9be8"/></svg><i class="absolute bottom-0 inset-x-[5px] h-[2px] bg-[#b8b4b0]"></i></button>
  <button aria-label="File Explorer" class="w-[36px] h-full grid place-items-center"><svg width="17" height="14" viewBox="0 0 17 14"><path d="M0 0h7l1 2h9v12H0z" fill="#e8a820"/><path d="M0 4h17v10H0z" fill="#fcd462"/><path d="M3.500 14V8h10v6H11v-3H6v3z" fill="#3a8ee0"/></svg></button>
  <button aria-label="Altium Designer" class="relative w-[37px] h-full grid place-items-center bg-[#4a4a4a]"><svg width="15" height="17" viewBox="0 0 16 17"><use href="#altium"/></svg><i class="absolute bottom-0 inset-x-0 h-[2px] bg-[#b8b4b0]"></i></button>
  <button aria-label="EasyEDA" class="relative w-[38px] h-full grid place-items-center"><svg width="16" height="16" viewBox="0 0 16 16"><rect width="16" height="16" rx="2" fill="#5588ff"/><path d="M6 11.500H4.500C1.500 11.500 1 8 4 7.500 4.500 3 10.500 3 11.500 7c3.500 0 3.500 4.500 0 4.500-2 0-2.500-3-4.500-3s-2 2.500-.5 2.500" fill="none" stroke="#fff" stroke-width="1.500"/></svg><i class="absolute bottom-0 inset-x-[5px] h-[2px] bg-[#b8b4b0]"></i></button>

  <div class="ml-auto h-full flex items-center pr-1">
    <button class="flex items-center gap-[10px]"><svg width="21" height="16" viewBox="0 0 21 16"><path d="M4 12C-1 11-.5 5.500 4 5.500 5-.5 13-1 14.500 4c6-.5 8 7 2 8z" fill="#b9dcf8"/><circle cx="9" cy="4.500" r="4" fill="#e4f2fd"/><path d="M10 9q4 5 0 6.500-4-1.500 0-6.500z" fill="#2f8ee8"/></svg><span class="w-[28px]">27°C</span><span class="w-[68px]">Hujan rin...</span></button>
    <button aria-label="Show hidden icons" class="ml-[9px]"><svg width="12" height="7"><path d="m.5 6.500 5.500-5.500 5.500 5.500" fill="none" stroke="#fff" stroke-width="1.300"/></svg></button>
    <svg class="ml-[12px]" width="12" height="16" viewBox="0 0 12 16" fill="none" stroke="#fff"><rect x="1" y="4.500" width="7" height="7" rx="1"/><path d="m8 7 3-1.500v5L8 9M2 2q4-2.500 7 0M2 14q4 2.500 7 0"/></svg>
    <svg class="ml-[10px]" width="16" height="11" viewBox="0 0 16 11"><path d="M3 10C-1 9 0 5 3 5c1-6 8-6 9-2z" fill="#aaa"/><path d="M3 10.500c-2-1-1-4 2-3.500C7 3 12 4 12.500 6c4 0 4.500 4.500 0 4.500z" fill="#fff"/></svg>
    <svg class="ml-[8px]" width="17" height="14" viewBox="0 0 17 14" fill="none" stroke="#ddd"><path d="M6 4.500h9v7H4M16.500 7v2.500M8.500 6.500l4 3.500M12.500 6.500l-4 3.500M1.500 1v2M4.500 1v2M3 6v4"/><path d="M.5 3h5v2L3 6.500.5 5z" fill="#fff"/></svg>
    <svg class="ml-[9px]" width="14" height="14" viewBox="0 0 14 14" fill="none" stroke="#ddd" stroke-width="1.300"><path d="M1 13Q1 2 13 1.500M4 13q0-8 9-8.500M7 13q0-5 6-5.500M10 13q0-2 3-2.500"/></svg>
    <svg class="ml-[7px]" width="17" height="14" viewBox="0 0 17 14" fill="none" stroke="#fff"><path d="M.5 4.500h3L7 1v12L3.500 9.500h-3zM9 4.500q2 2.500 0 5M11.500 2.500q3 4.500 0 9M14 1q4 6 0 12"/></svg>
    <span class="ml-[10px] w-[28px] text-[11px]">16:01</span>
    <button aria-label="Notifications" class="ml-[17px]"><svg width="18" height="17" viewBox="0 0 18 17"><path d="M1 1h15v12H8l-3 3v-3H1z" fill="#fff"/><path d="M3.500 4h10M3.500 7h10M3.500 10h5" stroke="#3b3b3b"/><circle cx="13" cy="11.500" r="4" fill="#3b3b3b"/><path d="M14.500 8a4 4 0 1 1-4.500 5.500 3.800 3.800 0 0 0 4.500-5.500z" fill="#fff"/></svg></button>
    <i class="ml-[19px] w-px h-full bg-[#888]"></i>
  </div>
</div>

<script>
(() => {
  const NS = 'http://www.w3.org/2000/svg';
  const labels = document.getElementById('labels');
  const pins = document.getElementById('pins');

  // Silkscreen text centred on a point, turned by the given angle
  function label(text, x, y, angle) {
    const t = document.createElementNS(NS, 'text');
    t.setAttribute('transform', `translate(${x} ${y}) rotate(${angle})`);
    t.setAttribute('y', 3);
    t.textContent = text;
    labels.appendChild(t);
    return t;
  }
  function pin(kind, x, y) {
    const u = document.createElementNS(NS, 'use');
    u.setAttribute('href', kind);
    u.setAttribute('x', x);
    u.setAttribute('y', y);
    pins.appendChild(u);
  }

  const upper = 'VIN GND D13 D12 D14 D27 D26 D25 D33 D32 D35 D34 VN VP EN'.split(' ');
  const lower = '3V3 GND D15 D2 D4 RX2 TX2 D5 D18 D19 D21 RX0 TX0 D22 D23'.split(' ');
  const small = { fontSize: '6px', fontWeight: 'bold' };
  upper.forEach((name, i) => {
    const x = 565.5 + i * 11.75;
    pin(i ? '#pin' : '#sqpin', x, 181);
    Object.assign(label(name, x - 1, 194, 90).style, small);
    pin('#pin', x, 301);
    Object.assign(label(lower[i], x - 1, 287, 90).style, small);
  });
  Object.assign(label('ESP-WROOM-32', 678, 242, 90).style, { fontSize: '7px', fontWeight: 'bold' });

  [['IC2', 885, 198, 0], ['U14', 896, 328, 0], ['U15', 759, 247, 90], ['CN2', 1024, 232, -90], ['U12', 1055, 311, 90],
   ['H1', 1049, 370, 90], ['R14', 851, 466, 90], ['R20', 897, 466, 90], ['R15', 921, 466, 90], ['R21', 944, 466, 90],
   ['R16', 968, 466, 90], ['R12', 991, 466, 90], ['R17', 860, 546, 90], ['R25', 884, 547, 90], ['R1', 907, 544, 90],
   ['C8', 941, 524, 90], ['C10', 964, 526, 90], ['C9', 941, 571, 90], ['C6', 964, 571, 90], ['C7', 877, 577, 0],
   ['C7', 951, 594, 0], ['LED1', 883, 602, 0], ['U9', 1049, 474, 90], ['U10', 1049, 535, 90], ['U11', 1010, 608, 180]
  ].forEach(l => label(...l));
})();
</script>
</body>
</html>
